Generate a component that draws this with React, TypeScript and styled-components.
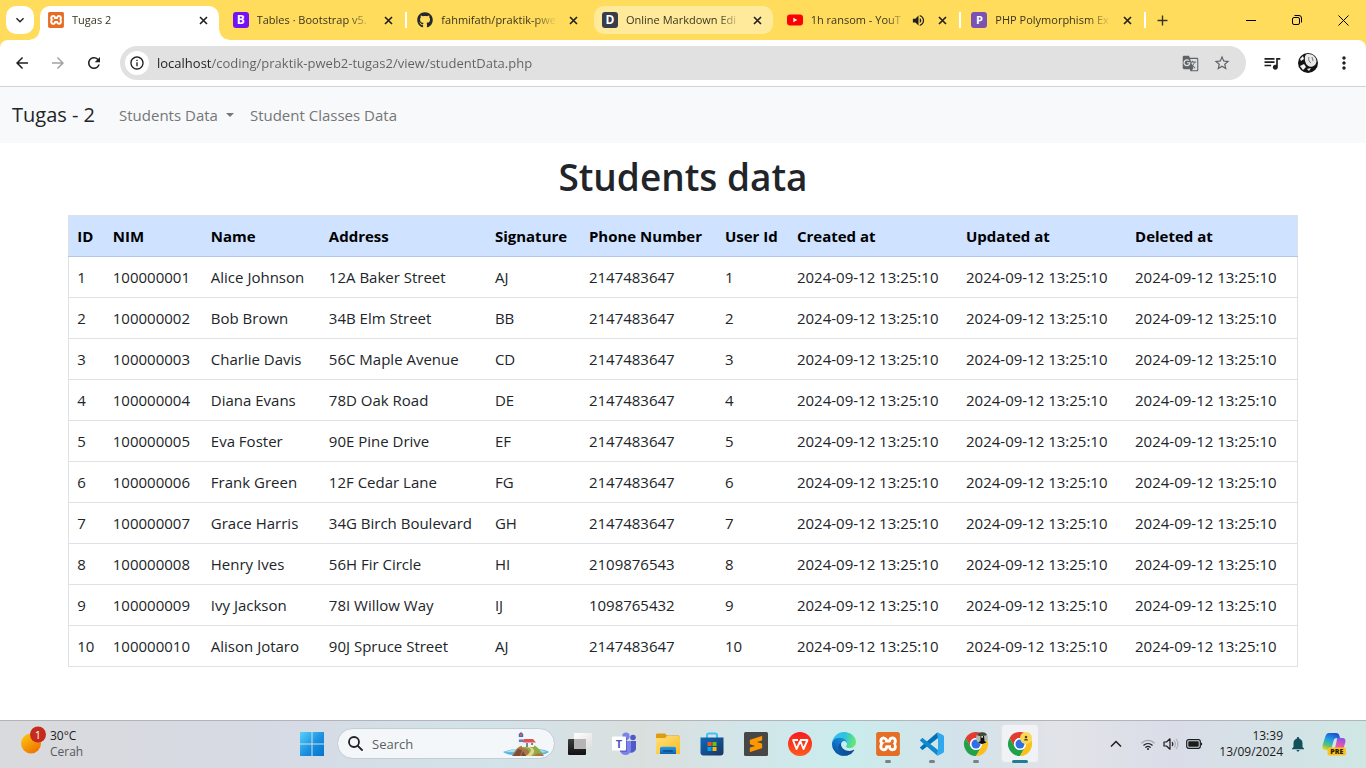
import React from "react";
import styled, { createGlobalStyle, css } from "styled-components";
import {
  MdArrowBack,
  MdArrowForward,
  MdExpandMore,
  MdGTranslate,
  MdInfoOutline,
  MdAdd,
  MdMoreVert,
  MdNotifications,
  MdQueueMusic,
  MdRefresh,
  MdStarBorder,
  MdVolumeUp,
} from "react-icons/md";
import { FaGithub } from "react-icons/fa";
import { SiSublimetext, SiXampp } from "react-icons/si";

const GlobalStyle = createGlobalStyle`
  *, *::before, *::after { box-sizing: border-box; }
  body {
    margin: 0;
    background: #fff;
    color: #212529;
    font-family: "Open Sans", "Noto Sans", sans-serif;
  }
  button, input { font: inherit; color: inherit; }
  button { padding: 0; border: 0; background: none; cursor: pointer; }
  svg { display: block; flex: none; }
`;

const Screen = styled.div`
  display: flex;
  flex-direction: column;
  min-height: 100vh;
`;

/* ---------- Browser chrome ---------- */

const TabStrip = styled.header`
  display: flex;
  height: 40px;
  background: #ffdc5c;
`;

const TabSearch = styled.button`
  display: grid;
  place-items: center;
  flex: none;
  width: 28px;
  height: 28px;
  margin: 6px 6px 0;
  border-radius: 10px;
  background: #fff;
  color: #1f1f1f;
`;

const TabList = styled.div`
  display: flex;
  flex: 0 1 1108px;
  min-width: 0;
`;

const TabSlot = styled.div<{ $separator?: boolean }>`
  position: relative;
  flex: 1 1 0;
  min-width: 0;
  padding: 6px 6px 0 0;

  ${(p) =>
    p.$separator &&
    css`
      &::after {
        content: "";
        position: absolute;
        top: 12px;
        right: 2px;
        width: 2px;
        height: 16px;
        background: #fff;
      }
    `}
`;

const TabBody = styled.div<{ $state?: "active" | "hover" }>`
  position: relative;
  display: flex;
  align-items: center;
  height: 28px;
  padding: 0 7px 0 8px;
  border-radius: 10px;
  background: ${(p) => (p.$state === "hover" ? "#ffe99b" : "transparent")};

  ${(p) =>
    p.$state === "active" &&
    css`
      height: 34px;
      padding-bottom: 6px;
      border-radius: 10px 10px 0 0;
      background: #fff;

      &::before,
      &::after {
        content: "";
        position: absolute;
        bottom: 0;
        width: 10px;
        height: 10px;
      }
      &::before {
        left: -10px;
        background: radial-gradient(circle at 0 0, transparent 9px, #fff 10px);
      }
      &::after {
        right: -10px;
        background: radial-gradient(circle at 100% 0, transparent 9px, #fff 10px);
      }
    `}
`;

const TabLabel = styled.button`
  display: flex;
  align-items: center;
  gap: 8px;
  flex: 1;
  min-width: 0;
  height: 28px;
  text-align: left;
`;

const TabTitle = styled.span`
  flex: 1;
  min-width: 0;
  overflow: hidden;
  white-space: nowrap;
  font-size: 11px;
  line-height: 16px;
  color: #3a3520;
  mask-image: linear-gradient(to right, #000 80%, transparent);
`;

const TabClose = styled.button`
  display: grid;
  place-items: center;
  width: 16px;
  height: 16px;
  margin-left: 8px;
  color: #1f1f1f;
`;

const TabAudio = styled.button`
  display: grid;
  place-items: center;
  width: 16px;
  height: 16px;
  margin-left: 4px;
  color: #1f1f1f;
`;

const Badge = styled.span<{ $bg: string; $size: number }>`
  display: grid;
  place-items: center;
  flex: none;
  width: 16px;
  height: 16px;
  border-radius: 3px;
  background: ${(p) => p.$bg};
  color: #fff;
  font-size: ${(p) => p.$size}px;
  font-weight: 700;
  line-height: 16px;
`;

const NewTab = styled.button`
  display: grid;
  place-items: center;
  width: 28px;
  height: 28px;
  margin-top: 6px;
  color: #3a3520;
`;

const WindowControls = styled.div`
  display: flex;
  margin-left: auto;
`;

const WindowButton = styled.button`
  display: grid;
  place-items: center;
  width: 46px;
  height: 40px;
`;

const ToolbarBack = styled.div`
  background: #ffdc5c;
`;

const Toolbar = styled.div`
  display: flex;
  align-items: center;
  height: 47px;
  padding: 0 4px;
  border-bottom: 1px solid #cfd2d6;
  border-radius: 8px 8px 0 0;
  background: #fff;
`;

const ToolButton = styled.button<{ $color?: string }>`
  display: grid;
  place-items: center;
  flex: none;
  width: 36px;
  height: 36px;
  color: ${(p) => p.$color ?? "#1f1f1f"};
`;

const AddressBar = styled.div`
  display: flex;
  align-items: center;
  flex: 1;
  min-width: 0;
  height: 34px;
  margin: 0 8px;
  padding: 0 8px 0 5px;
  border-radius: 17px;
  background: #e1e1e1;
`;

const SiteInfo = styled.button`
  display: grid;
  place-items: center;
  width: 24px;
  height: 24px;
  border-radius: 50%;
  background: #fff;
  color: #1f1f1f;
`;

const AddressInput = styled.input`
  flex: 1;
  min-width: 0;
  height: 24px;
  margin: 0 8px;
  padding: 0;
  border: 0;
  outline: 0;
  font-size: 13px;
  background: linear-gradient(to right, #1f1f1f 55px, #5f6062 55px);
  background-clip: text;
  -webkit-text-fill-color: transparent;
`;

const AddressAction = styled.button`
  display: grid;
  place-items: center;
  width: 32px;
  height: 28px;
  color: #5f6368;
`;

/* ---------- Web page ---------- */

const Page = styled.main`
  flex: 1;
  padding-bottom: 16px;
`;

const NavBar = styled.nav`
  display: flex;
  align-items: center;
  height: 56px;
  padding: 0 12px;
  background: #f8f9fa;
`;

const Brand = styled.a`
  margin-right: 16px;
  font-size: 20px;
  line-height: 30px;
  color: #212529;
  text-decoration: none;
`;

const NavItem = styled.a`
  padding: 8px;
  font-size: 15px;
  line-height: 24px;
  color: #747678;
  text-decoration: none;
`;

const NavToggle = styled.button`
  display: flex;
  align-items: center;
  gap: 8px;
  padding: 8px;
  font-size: 15px;
  line-height: 24px;
  color: #747678;

  &::after {
    content: "";
    border: 4px solid transparent;
    border-top-color: currentColor;
    border-bottom: 0;
  }
`;

const Title = styled.h1`
  margin: 10px 0 14px;
  font-size: 37px;
  font-weight: 600;
  line-height: 48px;
  text-align: center;
`;

const Table = styled.table`
  width: 90%;
  margin: 0 auto;
  border: 1px solid #dee2e6;
  border-collapse: collapse;
  table-layout: fixed;
  font-size: 15px;
  line-height: 24px;
  white-space: nowrap;
`;

const HeadCell = styled.th`
  padding: 8px;
  border-bottom: 1px solid #b3c7e6;
  background: #cfe2ff;
  color: #000;
  font-weight: 700;
  text-align: left;
`;

const Cell = styled.td`
  padding: 8px;
  border-bottom: 1px solid #dee2e6;
`;

/* ---------- Taskbar ---------- */

const Taskbar = styled.footer`
  display: flex;
  align-items: stretch;
  height: 48px;
  padding-bottom: 2px;
  border-top: 1px solid #b2b4b9;
  background: linear-gradient(
    to right,
    #d9dadc 0%,
    #d6dae4 20%,
    #d3e3ea 36%,
    #dadfde 47%,
    #d2e6ea 55%,
    #caecec 62%,
    #d3e2ea 70%,
    #e2e3e8 78%,
    #dadde8 86%,
    #cfe7e4 100%
  );
`;

const Weather = styled.button`
  display: flex;
  align-items: center;
  gap: 3px;
  flex: 1 1 290px;
  padding-left: 17px;
  text-align: left;
`;

const SmallText = styled.span<{ $muted?: boolean }>`
  display: block;
  font-size: 12px;
  line-height: 16px;
  color: ${(p) => (p.$muted ? "#55585c" : "#1c1c1c")};
`;

const AppList = styled.div`
  display: flex;
  align-items: center;
  flex: none;
`;

const AppButton = styled.button<{ $open?: "idle" | "focused" }>`
  position: relative;
  display: grid;
  place-items: center;
  width: 44px;
  height: 47px;

  ${(p) =>
    p.$open === "focused" &&
    css`
      &::before {
        content: "";
        position: absolute;
        inset: 4px 3px;
        border: 1px solid #e3e4e8;
        border-radius: 4px;
        background: #f0f2f5;
      }
    `}

  ${(p) =>
    p.$open &&
    css`
      &::after {
        content: "";
        position: absolute;
        bottom: 4px;
        width: ${p.$open === "focused" ? 16 : 6}px;
        height: 3px;
        border-radius: 2px;
        background: ${p.$open === "focused" ? "#1f7f92" : "#7b7f86"};
      }
    `}

  svg { position: relative; }
`;

const SearchBox = styled.label`
  display: flex;
  align-items: center;
  width: 218px;
  height: 31px;
  margin: 0 3px;
  padding: 0 5px 0 10px;
  border: 1px solid #c5ccd2;
  border-radius: 16px;
  background: #f3f7fa;
  overflow: hidden;
`;

const SearchInput = styled.input`
  flex: 1;
  min-width: 0;
  margin-left: 9px;
  padding: 0;
  border: 0;
  outline: 0;
  background: transparent;
  font-size: 13px;
  &::placeholder { color: #5c5f62; opacity: 1; }
`;

const Tray = styled.div`
  display: flex;
  align-items: center;
  justify-content: flex-end;
  flex: 1 1 324px;
  padding-right: 18px;
`;

const TrayButton = styled.button`
  display: flex;
  align-items: center;
  justify-content: center;
  gap: 7px;
  height: 40px;
`;

const TrayExpand = styled(TrayButton)`
  width: 28px;
  margin-right: 10px;
`;

const Clock = styled(TrayButton)`
  margin: 0 6px 0 16px;
  text-align: right;
`;

const Copilot = styled(TrayButton)`
  width: 28px;
  margin-left: 13px;
`;

/* ---------- Icons ---------- */

const XamppIcon = ({ size }: { size: number }) => (
  <svg width={size} height={size} viewBox="0 0 24 24" aria-hidden="true">
    <rect x="1" y="1" width="22" height="22" rx="2" fill="#fff" />
    <SiXampp size={24} color="#e56e24" />
  </svg>
);

const TabCloseIcon = () => (
  <svg width="9" height="9" viewBox="0 0 9 9" stroke="currentColor" strokeWidth="1.600" aria-hidden="true">
    <path d="M1 1l7 7M8 1L1 8" />
  </svg>
);

const YoutubeIcon = () => (
  <svg width="16" height="16" viewBox="0 0 16 16" aria-hidden="true">
    <rect y="2.500" width="16" height="11" rx="3" fill="#f00" />
    <path d="M6.300 5.700v4.600l4-2.300z" fill="#fff" />
  </svg>
);

const AvatarIcon = () => (
  <svg width="20" height="20" viewBox="0 0 20 20" aria-hidden="true">
    <circle cx="10" cy="10" r="10" fill="#141414" />
    <path d="M8 1.500C13 0 18 3 18.500 8c0 3-2 5-4 5.500-3 1-6-1-7-4S6.500 3 8 1.500z" fill="#e8e8e8" />
    <path d="M11 4c-1 2 0 5 2 6M14 4l1 4" stroke="#777" fill="none" />
    <path d="M2 6l3-3 1 3-3 2zM2 13l4-2 2 3-3 3zM9 16l4-1-2 3z" fill="#f4f4f4" />
  </svg>
);

const MinimizeIcon = () => (
  <svg width="10" height="10" viewBox="0 0 10 10" stroke="#000" aria-hidden="true">
    <path d="M0 5.500h10" />
  </svg>
);

const RestoreIcon = () => (
  <svg width="10" height="10" viewBox="0 0 10 10" stroke="#000" fill="none" aria-hidden="true">
    <rect x=".5" y="2.500" width="7" height="7" rx="1.500" />
    <path d="M2.500.5H7A2.500 2.500 0 0 1 9.500 3v4.500" />
  </svg>
);

const CloseIcon = () => (
  <svg width="11" height="11" viewBox="0 0 11 11" stroke="#000" aria-hidden="true">
    <path d="M.5.5l10 10M10.500.5l-10 10" />
  </svg>
);

const SunIcon = () => (
  <svg width="30" height="36" viewBox="0 0 30 36" aria-hidden="true">
    <defs>
      <linearGradient id="sun" x1="0.100" y1="0" x2="0.800" y2="1">
        <stop offset="0" stopColor="#fccb10" />
        <stop offset="1" stopColor="#ee6c00" />
      </linearGradient>
    </defs>
    <circle cx="14" cy="17.500" r="10" fill="url(#sun)" />
    <circle cx="21" cy="8.500" r="8" fill="#c42b1c" />
    <text x="21" y="12.500" fontSize="11" textAnchor="middle" fill="#fff">1</text>
  </svg>
);

const StartIcon = () => (
  <svg width="24" height="24" viewBox="0 0 24 24" aria-hidden="true">
    <defs>
      <linearGradient id="start" gradientUnits="userSpaceOnUse" x1="0" y1="0" x2="24" y2="24">
        <stop offset="0" stopColor="#57d2fb" />
        <stop offset="0.550" stopColor="#1890df" />
        <stop offset="1" stopColor="#0673d0" />
      </linearGradient>
    </defs>
    <path d="M0 0h11.500v11.500H0zM12.500 0H24v11.500H12.500zM0 12.500h11.500V24H0zM12.500 12.500H24V24H12.500z" fill="url(#start)" />
  </svg>
);

const SearchIcon = () => (
  <svg width="15" height="15" viewBox="0 0 15 15" fill="none" stroke="#222" strokeWidth="1.800" aria-hidden="true">
    <circle cx="6" cy="6" r="5" />
    <path d="M9.800 9.800L14 14" strokeLinecap="round" />
  </svg>
);

const IslandIcon = () => (
  <svg width="46" height="26" viewBox="0 0 46 26" aria-hidden="true">
    <path d="M0 21c7-4 38-5 46 0-4 3-12 4-23 4S4 24 0 21z" fill="#57b6e3" />
    <path d="M2 21l9-3 24 0 9 3-8 1z" fill="#a6dff4" />
    <path d="M9 25c3-5 4-8 9-10l12 0c5 2 8 6 11 10z" fill="#a9764c" />
    <path d="M19 14l11 0c4 1 7 5 10 9-5-2-8 0-9 2h-8c5-4 4-7-4-8z" fill="#8dae45" />
    <path d="M23 16c7 1 6 5 0 9h5c5-4 4-8-2-9z" fill="#e9d390" />
    <path d="M10 25l5-7 4 1-2 6zM20 20l3 5h-5z" fill="#7c4d34" />
    <rect x="19" y="11" width="12" height="5" fill="#f3f1f4" />
    <path d="M18 11.500l3-3.500h9l3 3.500z" fill="#d9535a" />
    <path d="M23 12h2v4h-2zM28 12h2v2h-2z" fill="#7c8296" />
    <path d="M15.500 15l.8-9h3.400l.8 9z" fill="#eef0f6" />
    <path d="M16 8.500h4v2.500h-4.200z" fill="#5a7fc4" />
    <path d="M15.800 6V3L18 1l2.200 2v3z" fill="#4a6cae" />
    <path d="M17 3h2v2h-2z" fill="#e25a45" />
  </svg>
);

const TaskViewIcon = () => (
  <svg width="24" height="24" viewBox="0 0 24 24" aria-hidden="true">
    <defs>
      <linearGradient id="tvDark" x1="0" y1="0" x2="0" y2="1">
        <stop offset="0" stopColor="#3d3d3d" />
        <stop offset="1" stopColor="#111" />
      </linearGradient>
      <linearGradient id="tvLight" x1="0" y1="0" x2="1" y2="1">
        <stop offset="0" stopColor="#fff" />
        <stop offset="1" stopColor="#dedede" />
      </linearGradient>
    </defs>
    <rect x="0" y="7" width="18" height="16" rx="1" fill="url(#tvDark)" />
    <rect x="6" y="1" width="18" height="16" rx="1" fill="url(#tvLight)" />
    <rect x="6" y="7" width="12" height="10" fill="#b5b5b5" />
  </svg>
);

const TeamsIcon = () => (
  <svg width="24" height="24" viewBox="0 0 24 24" aria-hidden="true">
    <circle cx="21" cy="5.500" r="2.800" fill="#5059c9" />
    <path d="M16 9h8v8a4.500 4.500 0 0 1-8 2z" fill="#5059c9" />
    <circle cx="14" cy="4.200" r="3.700" fill="#7b83eb" />
    <path d="M8 9h11v8.500a5.500 5.500 0 0 1-11 0z" fill="#7b83eb" />
    <rect x="8" y="6" width="7" height="14" fill="#4a52b0" opacity="0.600" />
    <rect x="0" y="4.500" width="14" height="14" rx="1" fill="#fff" />
    <text x="7" y="15.500" fontSize="11" fontWeight="700" textAnchor="middle" fill="#4b53bc">T</text>
  </svg>
);

const FolderIcon = () => (
  <svg width="24" height="24" viewBox="0 0 24 24" aria-hidden="true">
    <defs>
      <linearGradient id="folder" x1="0" y1="0" x2="1" y2="1">
        <stop offset="0" stopColor="#ffe07a" />
        <stop offset="1" stopColor="#f9bd24" />
      </linearGradient>
      <linearGradient id="folderBase" x1="0" y1="0" x2="0" y2="1">
        <stop offset="0" stopColor="#2c9ae6" />
        <stop offset="1" stopColor="#0b63b0" />
      </linearGradient>
    </defs>
    <path d="M0 3c0-1 .6-1.500 1.500-1.500H9l2 2h11c1 0 2 .6 2 1.500v3H0z" fill="#dd9b10" />
    <path d="M0 6h9l2-2h11.500c1 0 1.500.6 1.500 1.500V22H0z" fill="url(#folder)" />
    <path d="M4 22v-5.500c0-1 .8-1.700 1.700-1.700h12.600c1 0 1.700.7 1.700 1.700V22z" fill="url(#folderBase)" />
    <rect x="7" y="18" width="10" height="2" rx="1" fill="#0a559c" />
  </svg>
);

const StoreIcon = () => (
  <svg width="24" height="24" viewBox="0 0 24 24" aria-hidden="true">
    <defs>
      <linearGradient id="store" x1="0" y1="0" x2="1" y2="1">
        <stop offset="0" stopColor="#0a6cbd" />
        <stop offset="1" stopColor="#1c3360" />
      </linearGradient>
    </defs>
    <path d="M7 6V3.200C7 2 7.800 1.500 8.800 1.500h6.400c1 0 1.800.5 1.800 1.700V6" fill="none" stroke="#3fc4f2" strokeWidth="2" />
    <path d="M.5 5.500h23v15c0 1.800-1.200 3-3 3h-17c-1.800 0-3-1.200-3-3z" fill="url(#store)" />
    <rect x="7.500" y="10" width="4" height="4" fill="#f25022" />
    <rect x="12.500" y="10" width="4" height="4" fill="#7fba00" />
    <rect x="7.500" y="15" width="4" height="4" fill="#00a4ef" />
    <rect x="12.500" y="15" width="4" height="4" fill="#ffb900" />
  </svg>
);

const SublimeIcon = () => (
  <svg width="24" height="24" viewBox="0 0 24 24" aria-hidden="true">
    <rect width="24" height="24" rx="1.500" fill="#474747" />
    <SiSublimetext x={4} y={4} size={16} color="#ff9800" />
  </svg>
);

const WpsIcon = () => (
  <svg width="24" height="24" viewBox="0 0 24 24" aria-hidden="true">
    <defs>
      <linearGradient id="wps" x1="0" y1="0" x2="0" y2="1">
        <stop offset="0" stopColor="#fb1a1c" />
        <stop offset="1" stopColor="#ff5a1d" />
      </linearGradient>
    </defs>
    <circle cx="12" cy="12" r="12" fill="url(#wps)" />
    <path d="M4.500 8h5.500M5 8l3.500 9 3.800-8 3.200 8L19.500 8H12" fill="none" stroke="#fff" strokeWidth="1.900" strokeLinejoin="round" />
  </svg>
);

const EdgeIcon = () => (
  <svg width="24" height="24" viewBox="4.600 4.900 256 256" aria-hidden="true">
    <defs>
      <linearGradient id="edgeA" x1="0" y1="0" x2="1" y2="0">
        <stop offset="0" stopColor="#0c59a4" />
        <stop offset="1" stopColor="#114a8b" />
      </linearGradient>
      <linearGradient id="edgeB" x1="1" y1="0" x2="0.300" y2="1">
        <stop offset="0" stopColor="#1b9de2" />
        <stop offset="0.600" stopColor="#0e70c8" />
        <stop offset="1" stopColor="#0a4f97" />
      </linearGradient>
      <linearGradient id="edgeC" x1="0" y1="0.300" x2="1" y2="0.500">
        <stop offset="0" stopColor="#35c1f1" />
        <stop offset="0.500" stopColor="#2fc2df" />
        <stop offset="1" stopColor="#66eb6e" />
      </linearGradient>
    </defs>
    <path fill="url(#edgeA)" d="M235.680 195.460a93.730 93.730 0 0 1-10.540 4.710 101.870 101.870 0 0 1-35.900 6.460c-47.320 0-88.540-32.550-88.540-74.320A31.480 31.480 0 0 1 117.130 105c-42.800 1.800-53.800 46.400-53.800 72.530 0 73.880 68.090 81.370 82.760 81.370 7.910 0 19.840-2.300 27-4.560l1.310-.44a128.340 128.340 0 0 0 66.600-52.800 4 4 0 0 0-5.320-5.640z" />
    <path fill="url(#edgeB)" d="M110.340 246.340A79.200 79.200 0 0 1 87.600 225a80.720 80.720 0 0 1 29.530-120c3.120-1.470 8.450-4.050 15.540-4a32.350 32.350 0 0 1 25.690 13 31.880 31.880 0 0 1 6.360 18.660c0-.21 24.460-79.600-80-79.600-43.900 0-80 41.660-80 78.210a130.150 130.150 0 0 0 12.110 56 128 128 0 0 0 156.380 67.110 75.550 75.550 0 0 1-62.780-8z" />
    <path fill="url(#edgeC)" d="M156.940 153.780c-.81 1.050-3.300 2.500-3.300 5.660 0 2.610 1.700 5.120 4.720 7.230 14.380 10 41.490 8.680 41.560 8.680a59.560 59.560 0 0 0 30.270-8.350 61.380 61.380 0 0 0 30.430-52.880c.26-22.410-8-37.310-11.340-43.910C228.090 28.760 182.350 4.920 132.610 4.920a128 128 0 0 0-128 126.200c.48-36.540 36.800-66.050 80-66.050 3.500 0 23.460.34 42 10.070 16.340 8.580 24.900 18.940 30.850 29.210 6.180 10.670 7.280 24.150 7.280 29.520s-2.740 13.330-7.800 19.910z" />
  </svg>
);

const VscodeIcon = () => (
  <svg width="24" height="24" viewBox="0 0 24 24" aria-hidden="true">
    <path d="M17.500.3L18 6 3.200 17.600c-.5.400-1 .4-1.400 0L.4 16.300c-.5-.4-.5-1 0-1.400z" fill="#0072b8" />
    <path d="M17.500 23.700L18 18 3.200 6.400c-.5-.4-1-.4-1.400 0L.4 7.700c-.5.400-.5 1 0 1.400z" fill="#1189d1" />
    <path d="M17.500.3L23 2.900c.6.300 1 .9 1 1.500v15.200c0 .6-.4 1.200-1 1.500l-5.500 2.600c-.5.200-1 .1-1.400-.3.700.6 1.900.1 1.900-.9V1.500c0-1-1.200-1.500-1.900-.9.400-.4.900-.5 1.400-.3z" fill="#2ea8ee" />
  </svg>
);

const ChromeIcon = ({ profile }: { profile: "photo" | "generic" }) => (
  <svg width="26" height="24" viewBox="0 0 26 24" aria-hidden="true">
    <g transform="translate(1 0) scale(0.500)">
      <path d="M3.200 12A24 24 0 0 1 44.800 12L24 12A12 12 0 0 0 13.600 30z" fill="#e33b2e" />
      <path d="M3.200 12A24 24 0 0 0 24 48L34.400 30A12 12 0 0 1 13.600 30z" fill="#22a14b" />
      <path d="M44.800 12A24 24 0 0 1 24 48L34.400 30A12 12 0 0 0 24 12z" fill="#fbc116" />
      <circle cx="24" cy="24" r="12" fill="#fff" />
      <circle cx="24" cy="24" r="9" fill="#2d6fe8" />
    </g>
    {profile === "generic" ? (
      <>
        <circle cx="19" cy="6" r="6" fill="#fbd956" />
        <circle cx="19" cy="5" r="1.300" fill="#5a4a14" />
        <path d="M17 8.500c0-2.500 4-2.500 4 0z" fill="#5a4a14" />
      </>
    ) : (
      <>
        <circle cx="19" cy="6" r="6" fill="#b3bcae" />
        <path d="M14 3c1-3 8-4 10 0-3 1-7 2-10 0z" fill="#3f4a3a" />
        <path d="M17.500 4h3.500l.5 5 2 1.500-4.500 1.500-4-1.500 2.500-1.500z" fill="#0d0f0d" />
        <path d="M18.300 4h1.700v1.700h-1.700z" fill="#e6ddd0" />
      </>
    )}
  </svg>
);

const WifiIcon = () => (
  <svg width="16" height="16" viewBox="0 0 16 16" fill="none" stroke="#1c1c1c" strokeLinecap="round" aria-hidden="true">
    <path d="M1.800 7a8.700 8.700 0 0 1 12.400 0" stroke="#9da1a8" strokeWidth="1.100" />
    <path d="M3.800 9.200a6 6 0 0 1 8.400 0M5.800 11.300a3.200 3.200 0 0 1 4.400 0" strokeWidth="1.200" />
    <circle cx="8" cy="13" r="1" fill="#1c1c1c" stroke="none" />
  </svg>
);

const SpeakerIcon = () => (
  <svg width="16" height="16" viewBox="0 0 16 16" fill="none" stroke="#1c1c1c" strokeLinejoin="round" aria-hidden="true">
    <path d="M1 6h2.500L7 2.800v10.400L3.500 10H1z" strokeWidth="1.200" />
    <path d="M9 6a3 3 0 0 1 0 4" strokeWidth="1.100" />
    <path d="M11 4.300a5.500 5.500 0 0 1 0 7.400M13 2.800a8 8 0 0 1 0 10.400" stroke="#a3a6ad" />
  </svg>
);

const BatteryIcon = () => (
  <svg width="17" height="16" viewBox="0 0 17 16" aria-hidden="true">
    <rect x=".7" y="3.700" width="13.600" height="8.600" rx="2" fill="none" stroke="#1c1c1c" strokeWidth="1.200" />
    <rect x="2.300" y="5.300" width="10.400" height="5.400" rx=".8" fill="#1c1c1c" />
    <path d="M15 6.500c1.600.2 1.600 2.800 0 3z" fill="#1c1c1c" />
  </svg>
);

const ChevronUpIcon = () => (
  <svg width="12" height="8" viewBox="0 0 12 8" fill="none" stroke="#1c1c1c" strokeWidth="1.500" aria-hidden="true">
    <path d="M1 6.500l5-5 5 5" />
  </svg>
);

const CopilotIcon = () => (
  <svg width="24" height="24" viewBox="0 0 24 24" aria-hidden="true">
    <defs>
      <linearGradient id="copilotA" x1="0.600" y1="0" x2="0.200" y2="1">
        <stop offset="0" stopColor="#1b50d8" />
        <stop offset="0.400" stopColor="#1fa0e0" />
        <stop offset="0.750" stopColor="#5bc474" />
        <stop offset="1" stopColor="#f3cf28" />
      </linearGradient>
      <linearGradient id="copilotB" x1="0.500" y1="0" x2="0.300" y2="1">
        <stop offset="0" stopColor="#8f52e8" />
        <stop offset="0.500" stopColor="#e85aa4" />
        <stop offset="1" stopColor="#fb8a4b" />
      </linearGradient>
    </defs>
    <path d="M7 1h7c2 0 3 1 3.500 3L18 6h-3c-2 0-3 1-3.500 3L9.500 16c-.5 1.600-1.500 2-3 2H3.500C1 18-.2 16 .6 13L3.500 4C4.200 2 5.300 1 7 1z" fill="url(#copilotA)" />
    <path d="M15 6h5.500C23 6 24 8 23.300 10.500L21 18c-.7 2-2 3-4 3H9c2 0 3-1 3.500-3l2-8z" fill="url(#copilotB)" />
    <rect x="5.500" y="15.500" width="18.500" height="8" rx="2" fill="#fcc21c" />
    <text x="14.800" y="22.300" fontSize="7" fontWeight="800" textAnchor="middle" fill="#2b2100">PRE</text>
  </svg>
);

/* ---------- Data ---------- */

interface TabInfo {
  title: string;
  icon: React.ReactNode;
  state?: "active" | "hover";
  separator?: boolean;
  audio?: boolean;
}

const tabs: TabInfo[] = [
  { title: "Tugas 2", icon: <XamppIcon size={16} />, state: "active" },
  { title: "Tables · Bootstrap v5.", icon: <Badge $bg="#7511f7" $size={12}>B</Badge>, separator: true },
  { title: "fahmifath/praktik-pwe", icon: <FaGithub size={16} color="#24292f" /> },
  { title: "Online Markdown Edi", icon: <Badge $bg="#373d49" $size={12}>D</Badge>, state: "hover" },
  { title: "1h ransom - YouT", icon: <YoutubeIcon />, audio: true, separator: true },
  { title: "PHP Polymorphism Ex", icon: <Badge $bg="#7952b3" $size={11}>P</Badge>, separator: true },
];

const columns = [
  { label: "ID", width: 36 },
  { label: "NIM", width: 98 },
  { label: "Name", width: 118 },
  { label: "Address", width: 166 },
  { label: "Signature", width: 94 },
  { label: "Phone Number", width: 136 },
  { label: "User Id", width: 72 },
  { label: "Created at", width: 169 },
  { label: "Updated at", width: 169 },
  { label: "Deleted at", width: 170 },
];

const Col = styled.col<{ $width: number }>`
  width: ${(p) => p.$width}px;
`;

const stamp = "2024-09-12 13:25:10";

const students = [
  ["Alice Johnson", "12A Baker Street", "AJ", "2147483647"],
  ["Bob Brown", "34B Elm Street", "BB", "2147483647"],
  ["Charlie Davis", "56C Maple Avenue", "CD", "2147483647"],
  ["Diana Evans", "78D Oak Road", "DE", "2147483647"],
  ["Eva Foster", "90E Pine Drive", "EF", "2147483647"],
  ["Frank Green", "12F Cedar Lane", "FG", "2147483647"],
  ["Grace Harris", "34G Birch Boulevard", "GH", "2147483647"],
  ["Henry Ives", "56H Fir Circle", "HI", "2109876543"],
  ["Ivy Jackson", "78I Willow Way", "IJ", "1098765432"],
  ["Alison Jotaro", "90J Spruce Street", "AJ", "2147483647"],
].map((fields, i) => [String(i + 1), String(100000001 + i), ...fields, String(i + 1), stamp, stamp, stamp]);

const apps: { name: string; icon: React.ReactNode; open?: "idle" | "focused" }[] = [
  { name: "Task view", icon: <TaskViewIcon /> },
  { name: "Microsoft Teams", icon: <TeamsIcon /> },
  { name: "File Explorer", icon: <FolderIcon /> },
  { name: "Microsoft Store", icon: <StoreIcon /> },
  { name: "Sublime Text", icon: <SublimeIcon /> },
  { name: "WPS Office", icon: <WpsIcon /> },
  { name: "Microsoft Edge", icon: <EdgeIcon /> },
  { name: "XAMPP", icon: <XamppIcon size={24} />, open: "idle" },
  { name: "Visual Studio Code", icon: <VscodeIcon />, open: "idle" },
  { name: "Chrome, first profile", icon: <ChromeIcon profile="photo" />, open: "idle" },
  { name: "Chrome, second profile", icon: <ChromeIcon profile="generic" />, open: "focused" },
];

export default function App() {
  return (
    <Screen>
      <GlobalStyle />
      <TabStrip>
        <TabSearch aria-label="Search tabs"><MdExpandMore size={16} /></TabSearch>
        <TabList>
          {tabs.map((tab) => (
            <TabSlot key={tab.title} $separator={tab.separator}>
              <TabBody $state={tab.state}>
                <TabLabel>
                  {tab.icon}
                  <TabTitle>{tab.title}</TabTitle>
                </TabLabel>
                {tab.audio && <TabAudio aria-label="Mute tab"><MdVolumeUp size={15} /></TabAudio>}
                <TabClose aria-label={`Close ${tab.title}`}><TabCloseIcon /></TabClose>
              </TabBody>
            </TabSlot>
          ))}
        </TabList>
        <NewTab aria-label="New tab"><MdAdd size={17} /></NewTab>
        <WindowControls>
          <WindowButton aria-label="Minimize"><MinimizeIcon /></WindowButton>
          <WindowButton aria-label="Restore"><RestoreIcon /></WindowButton>
          <WindowButton aria-label="Close window"><CloseIcon /></WindowButton>
        </WindowControls>
      </TabStrip>

      <ToolbarBack>
        <Toolbar>
          <ToolButton aria-label="Back"><MdArrowBack size={18} /></ToolButton>
          <ToolButton aria-label="Forward" $color="#a3a3a3"><MdArrowForward size={18} /></ToolButton>
          <ToolButton aria-label="Reload"><MdRefresh size={18} /></ToolButton>
          <AddressBar>
            <SiteInfo aria-label="Site information"><MdInfoOutline size={16} /></SiteInfo>
            <AddressInput
              aria-label="Address"
              spellCheck={false}
              defaultValue="localhost/coding/praktik-pweb2-tugas2/view/studentData.php"
            />
            <AddressAction aria-label="Translate this page"><MdGTranslate size={17} /></AddressAction>
            <AddressAction aria-label="Bookmark this page"><MdStarBorder size={18} /></AddressAction>
          </AddressBar>
          <ToolButton aria-label="Media controls"><MdQueueMusic size={20} /></ToolButton>
          <ToolButton aria-label="Profile"><AvatarIcon /></ToolButton>
          <ToolButton aria-label="Menu"><MdMoreVert size={20} /></ToolButton>
        </Toolbar>
      </ToolbarBack>

      <Page>
        <NavBar>
          <Brand href="#">Tugas - 2</Brand>
          <NavToggle aria-haspopup="true" aria-expanded="false">Students Data</NavToggle>
          <NavItem href="#">Student Classes Data</NavItem>
        </NavBar>
        <Title>Students data</Title>
        <Table>
          <colgroup>
            {columns.map((c) => <Col key={c.label} $width={c.width} />)}
          </colgroup>
          <thead>
            <tr>
              {columns.map((c) => <HeadCell key={c.label} scope="col">{c.label}</HeadCell>)}
            </tr>
          </thead>
          <tbody>
            {students.map((row) => (
              <tr key={row[1]}>
                {row.map((value, i) => <Cell key={columns[i].label}>{value}</Cell>)}
              </tr>
            ))}
          </tbody>
        </Table>
      </Page>

      <Taskbar>
        <Weather>
          <SunIcon />
          <span>
            <SmallText>30°C</SmallText>
            <SmallText $muted>Cerah</SmallText>
          </span>
        </Weather>
        <AppList>
          <AppButton aria-label="Start"><StartIcon /></AppButton>
          <SearchBox>
            <SearchIcon />
            <SearchInput type="text" placeholder="Search" aria-label="Search" />
            <IslandIcon />
          </SearchBox>
          {apps.map((app) => (
            <AppButton key={app.name} aria-label={app.name} $open={app.open}>{app.icon}</AppButton>
          ))}
        </AppList>
        <Tray>
          <TrayExpand aria-label="Show hidden icons"><ChevronUpIcon /></TrayExpand>
          <TrayButton aria-label="Quick settings">
            <WifiIcon />
            <SpeakerIcon />
            <BatteryIcon />
          </TrayButton>
          <Clock>
            <span>
              <SmallText>13:39</SmallText>
              <SmallText>13/09/2024</SmallText>
            </span>
          </Clock>
          <TrayButton aria-label="Notifications"><MdNotifications size={18} color="#12505c" /></TrayButton>
          <Copilot aria-label="Copilot"><CopilotIcon /></Copilot>
        </Tray>
      </Taskbar>
    </Screen>
  );
}
